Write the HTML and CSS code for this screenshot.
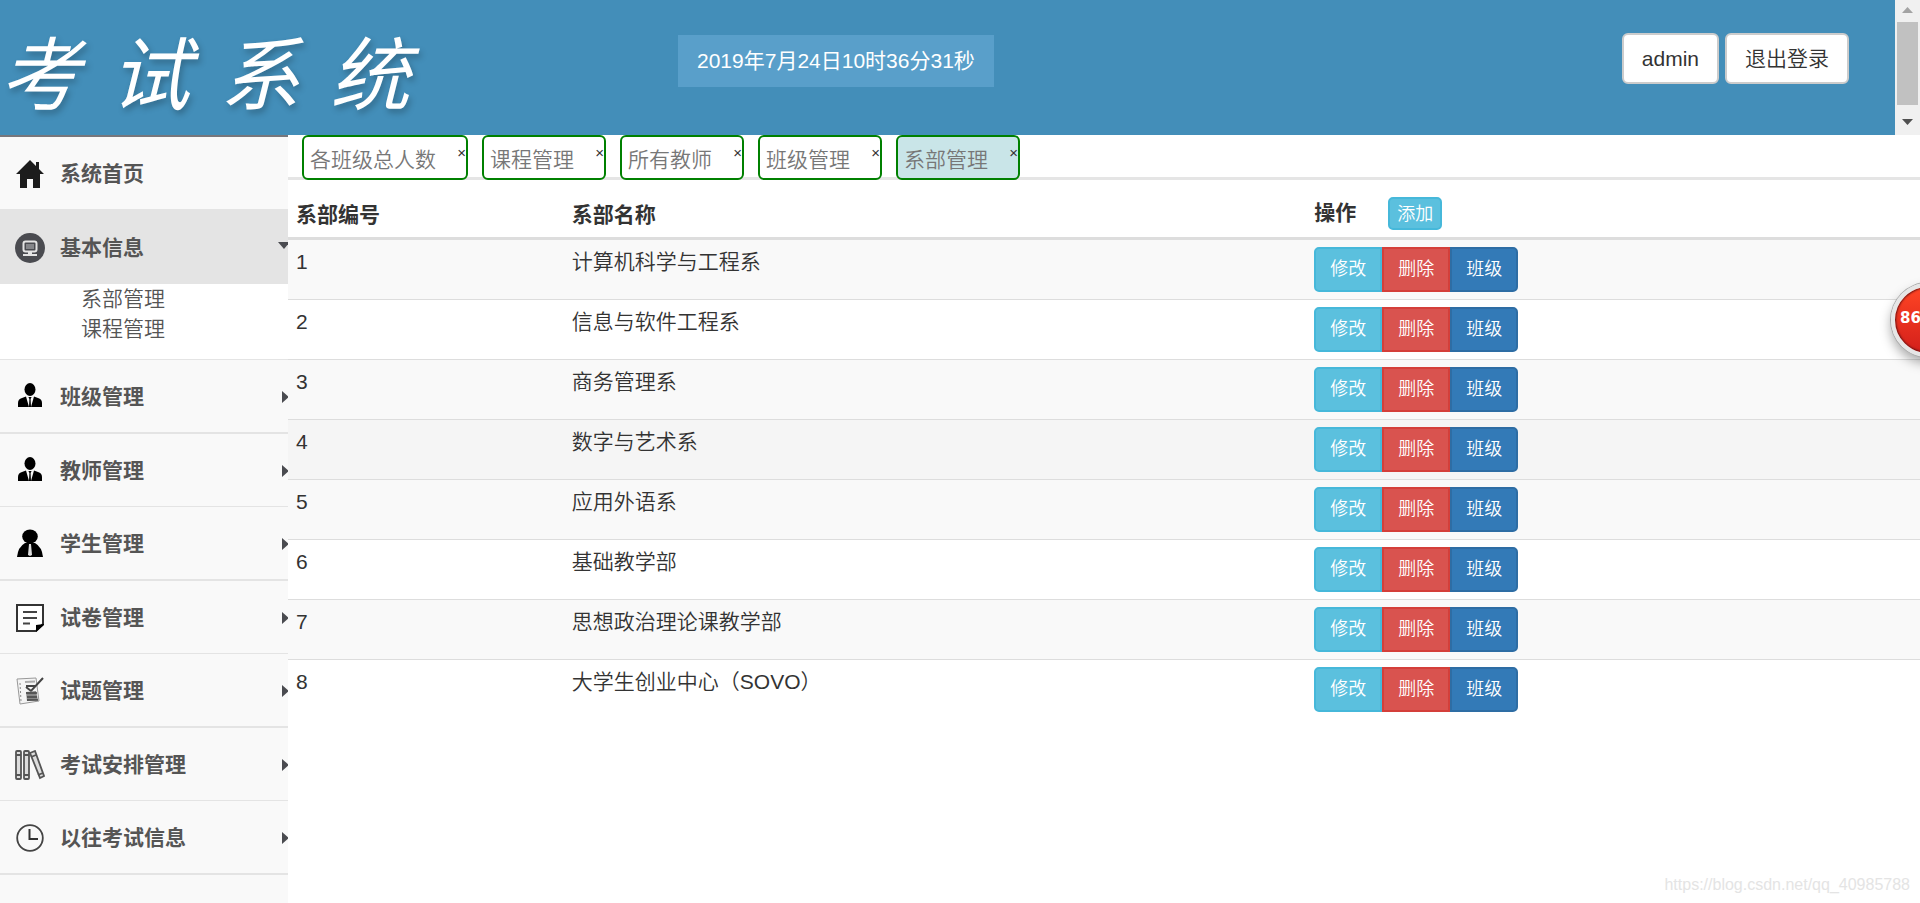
FILE: index.html
```html
<!DOCTYPE html>
<html lang="zh-CN">
<head>
<meta charset="utf-8">
<title>考试系统</title>
<link rel="stylesheet" href="styles.css">
</head>
<body>
<header class="header">
  <div class="header-main">
    <h1 class="logo"><span>考</span><span>试</span><span>系</span><span>统</span></h1>
    <time class="clock">2019年7月24日10时36分31秒</time>
    <div class="user">
      <button class="user-btn" type="button">admin</button>
      <button class="user-btn" type="button">退出登录</button>
    </div>
  </div>
  <div class="scrollbar" aria-hidden="true">
    <svg class="scroll-arrow" viewBox="0 0 25 22"><path d="M7 13h11l-5.500-6z" fill="#a3a3a3"/></svg>
    <div class="thumb"></div>
    <svg class="scroll-arrow low" viewBox="0 0 25 30"><path d="M7 14h11l-5.500 6z" fill="#505050"/></svg>
  </div>
</header>
<div class="body">
  <nav class="sidebar">
    <a class="item" href="#"><svg class="icon" viewBox="0 0 30 30"><path d="M15 1 1 15h4v14h7V20h6v9h7V15h4l-5-5V3h-3v4z" fill="#1c1c1c"/></svg><span>系统首页</span></a>
    <a class="item open" href="#"><svg class="icon" viewBox="0 0 30 30"><circle cx="15" cy="15" r="15" fill="#4a4b50"/><rect x="8.500" y="8.500" width="13" height="10" rx="2" fill="none" stroke="#e4e4e4" stroke-width="2"/><path d="M11 11h8v5h-8z" fill="#85868a"/><path d="M13 19h4v2h5v2H8v-2h5z" fill="#e4e4e4"/></svg><span>基本信息</span><svg class="caret down" viewBox="0 0 10 12"><path d="M0 0h12L6 7z" fill="#4a4b50"/></svg></a>
    <ul class="submenu">
      <li><a href="#">系部管理</a></li>
      <li><a href="#">课程管理</a></li>
    </ul>
    <a class="item thick" href="#"><svg class="icon" viewBox="0 0 30 30"><ellipse cx="15" cy="7.500" rx="5.500" ry="6.500"/><path d="M3 25v-4q0-4 4-5l4-1.500 3 10.500 .4-8-1-2h3.200l-1 2 .4 8 3-10.500 4 1.500q4 1 4 5v4z"/></svg><span>班级管理</span><svg class="caret" viewBox="0 0 6 12"><path d="M0 0v12l7-6z" fill="#4a4b50"/></svg></a>
    <a class="item" href="#"><svg class="icon" viewBox="0 0 30 30"><ellipse cx="15" cy="7.500" rx="5.500" ry="6.500"/><path d="M3 25v-4q0-4 4-5l4-1.500 3 10.500 .4-8-1-2h3.200l-1 2 .4 8 3-10.500 4 1.500q4 1 4 5v4z"/></svg><span>教师管理</span><svg class="caret" viewBox="0 0 6 12"><path d="M0 0v12l7-6z" fill="#4a4b50"/></svg></a>
    <a class="item thick" href="#"><svg class="icon" viewBox="0 0 30 30"><ellipse cx="15" cy="7.500" rx="7.800" ry="7"/><path d="M2 28q1-10 8-14h10q7 4 8 14z"/><path d="m14 15-1 11 2 1 2-1-1-11z" fill="#ddd"/></svg><span>学生管理</span><svg class="caret" viewBox="0 0 6 12"><path d="M0 0v12l7-6z" fill="#4a4b50"/></svg></a>
    <a class="item" href="#"><svg class="icon" viewBox="0 0 30 30"><path d="M2 2h26v19l-7 7H2z" fill="#fff" stroke="#333" stroke-width="2"/><path d="M29 21v1l-8 7v-7z"/><path d="M8 9h14M8 15h14M8 20.500h7" stroke="#444" stroke-width="2"/></svg><span>试卷管理</span><svg class="caret" viewBox="0 0 6 12"><path d="M0 0v12l7-6z" fill="#4a4b50"/></svg></a>
    <a class="item thick" href="#"><svg class="icon" viewBox="0 0 30 30"><path d="m2 3 19-1 3 23-19 3z" fill="#f4f4f4" stroke="#999"/><path d="m5 7 1 18" stroke="#888" stroke-dasharray="2 2"/><path d="M10 6l10-.5" stroke="#aaa" stroke-width="2"/><path d="M11 10h9M11 11l5 4L28 2" fill="none" stroke="#444" stroke-width="2"/><path d="m11 16 10-1 2 9-11 1z" fill="#888"/><path d="M11 17h11M12 21h10M12 24h11" stroke="#444" stroke-width="1.500"/></svg><span>试题管理</span><svg class="caret" viewBox="0 0 6 12"><path d="M0 0v12l7-6z" fill="#4a4b50"/></svg></a>
    <a class="item" href="#"><svg class="icon" viewBox="0 0 30 30"><g fill="#ddd" stroke="#555" stroke-width="1.800"><rect x="1" y="1" width="5" height="28" rx="1"/><rect x="9" y="1" width="5" height="28" rx="1"/><path d="m15 3 5-2 9 25-4 2z"/><path d="M1 5h5M9 5h5M16 7l5-2M1 25h5M9 25h5M23 25l5-2"/></g></svg><span>考试安排管理</span><svg class="caret" viewBox="0 0 6 12"><path d="M0 0v12l7-6z" fill="#4a4b50"/></svg></a>
    <a class="item thick" href="#"><svg class="icon" viewBox="0 0 30 30"><circle cx="15" cy="15" r="12.800" fill="none" stroke="#444" stroke-width="1.800"/><path d="M14.500 6v10H23" fill="none" stroke="#333" stroke-width="2"/></svg><span>以往考试信息</span><svg class="caret" viewBox="0 0 6 12"><path d="M0 0v12l7-6z" fill="#4a4b50"/></svg></a>
  </nav>
  <main class="content">
    <div class="tabs">
      <div class="tab"><a href="#">各班级总人数</a><button type="button" aria-label="关闭">×</button></div>
      <div class="tab"><a href="#">课程管理</a><button type="button" aria-label="关闭">×</button></div>
      <div class="tab"><a href="#">所有教师</a><button type="button" aria-label="关闭">×</button></div>
      <div class="tab"><a href="#">班级管理</a><button type="button" aria-label="关闭">×</button></div>
      <div class="tab current"><a href="#">系部管理</a><button type="button" aria-label="关闭">×</button></div>
    </div>
    <table class="table">
      <colgroup><col class="col-id"><col class="col-name"><col></colgroup>
      <thead>
        <tr><th>系部编号</th><th>系部名称</th><th>操作<button class="btn info small" type="button">添加</button></th></tr>
      </thead>
      <tbody>
        <tr><td>1</td><td>计算机科学与工程系</td><td><div class="group"><button class="btn info" type="button">修改</button><button class="btn danger" type="button">删除</button><button class="btn primary" type="button">班级</button></div></td></tr>
        <tr><td>2</td><td>信息与软件工程系</td><td><div class="group"><button class="btn info" type="button">修改</button><button class="btn danger" type="button">删除</button><button class="btn primary" type="button">班级</button></div></td></tr>
        <tr><td>3</td><td>商务管理系</td><td><div class="group"><button class="btn info" type="button">修改</button><button class="btn danger" type="button">删除</button><button class="btn primary" type="button">班级</button></div></td></tr>
        <tr class="hovered"><td>4</td><td>数字与艺术系</td><td><div class="group"><button class="btn info" type="button">修改</button><button class="btn danger" type="button">删除</button><button class="btn primary" type="button">班级</button></div></td></tr>
        <tr><td>5</td><td>应用外语系</td><td><div class="group"><button class="btn info" type="button">修改</button><button class="btn danger" type="button">删除</button><button class="btn primary" type="button">班级</button></div></td></tr>
        <tr><td>6</td><td>基础教学部</td><td><div class="group"><button class="btn info" type="button">修改</button><button class="btn danger" type="button">删除</button><button class="btn primary" type="button">班级</button></div></td></tr>
        <tr><td>7</td><td>思想政治理论课教学部</td><td><div class="group"><button class="btn info" type="button">修改</button><button class="btn danger" type="button">删除</button><button class="btn primary" type="button">班级</button></div></td></tr>
        <tr><td>8</td><td>大学生创业中心（SOVO）</td><td><div class="group"><button class="btn info" type="button">修改</button><button class="btn danger" type="button">删除</button><button class="btn primary" type="button">班级</button></div></td></tr>
      </tbody>
    </table>
  </main>
</div>
<div class="badge-area"><div class="badge">86</div></div>
<div class="watermark">https://blog.csdn.net/qq_40985788</div>
</body>
</html>
```
FILE: styles.css
```css
* { box-sizing: border-box; }
body {
  margin: 0;
  min-height: 100vh;
  display: flex;
  flex-direction: column;
  font: 350 21px/30px "Liberation Sans", "Noto Sans CJK SC", sans-serif;
  color: #333;
  background: #fff;
}
a { color: inherit; text-decoration: none; }
button { font: inherit; cursor: pointer; }

.header { display: flex; height: 135px; background: #438eb9; }
.header-main {
  flex: 1;
  display: flex;
  align-items: flex-start;
  padding-right: 46px;
}
.logo {
  flex: 0 0 678px;
  display: flex;
  gap: 30px;
  margin: 0;
  padding-top: 24px;
  font: italic 400 80px/90px "Noto Sans CJK SC", sans-serif;
  color: #fff;
  text-shadow: 2px 4px 6px rgba(0, 0, 0, .25);
}
.clock {
  margin-top: 35px;
  padding: 11px 19px;
  background: #599fca;
  color: #fff;
  font-weight: 400;
}
.user { display: flex; gap: 6px; margin: 33px 0 0 auto; }
.user-btn {
  height: 51px;
  padding: 0 18px;
  border: 2px solid #ccc;
  border-radius: 6px;
  background: #fff;
  color: #333;
}
.scrollbar {
  width: 25px;
  display: flex;
  flex-direction: column;
  background: #f0f0f0;
}
.scroll-arrow { display: block; width: 25px; height: 22px; }
.scroll-arrow.low { height: 30px; }
.thumb { flex: 1; margin: 0 2px; background: #c1c1c1; }

.body { flex: 1; display: flex; }
.sidebar {
  width: 288px;
  flex: none;
  overflow: hidden;
  background: #f9f9f9;
  border-top: 2px solid #77777c;
  color: #555;
}
.item {
  display: flex;
  align-items: center;
  min-height: 73px;
  padding: 2px 0 0 15px;
  border-bottom: 1px solid #e4e4e4;
  font-weight: 700;
}
.item.thick { min-height: 74px; border-bottom-width: 2px; }
.item.open { min-height: 74px; background: #e4e4e4; }
.icon { width: 30px; height: 30px; margin-right: 15px; }
.caret { width: 6px; height: 12px; margin-left: auto; }
.caret.down { width: 10px; }
.submenu {
  margin: 0;
  padding: 0 0 15px 81px;
  list-style: none;
  background: #fff;
  border-bottom: 1px solid #e4e4e4;
}

.content { flex: 1; }
.tabs {
  display: flex;
  gap: 14px;
  padding-left: 14px;
  background: linear-gradient(#e5e5e5, #e5e5e5) bottom / 100% 3px no-repeat;
}
.tab {
  display: flex;
  justify-content: space-between;
  height: 45px;
  padding-left: 6px;
  border: 2px solid #008000;
  border-radius: 6px;
  background: #fff;
  color: #777;
  line-height: 46px;
}
.tab.current { background: #c9e5e8; }
.tab button {
  width: 30px;
  height: 32px;
  padding: 0;
  border: 0;
  background: none;
  color: #333;
  font-size: 15px;
  line-height: 32px;
  text-align: right;
}

.table {
  width: 100%;
  table-layout: fixed;
  border-collapse: separate;
  border-spacing: 0;
}
.col-id { width: 16.9%; }
.col-name { width: 45.5%; }
.table th {
  height: 60px;
  padding: 7px 8px;
  border-bottom: 3px solid #ddd;
  text-align: left;
  vertical-align: bottom;
  font-weight: 700;
}
.table td {
  padding: 7px 8px;
  border-bottom: 1px solid #ddd;
  vertical-align: top;
}
.table tr:last-child td { border-bottom: 0; }
.table thead th { border-bottom: 3px solid #ddd; }
.table tbody tr:nth-child(odd) { background: #f9f9f9; }
.table tbody tr.hovered { background: #f5f5f5; }
.group { display: flex; }
.btn {
  height: 45px;
  padding: 0 14px 2px;
  border: 2px solid;
  color: #fff;
  font-size: 18px;
  font-weight: 350;
}
.group .btn:first-child { border-radius: 5px 0 0 5px; }
.group .btn:last-child { border-radius: 0 5px 5px 0; }
.btn.small {
  height: 33px;
  margin-left: 32px;
  padding: 0 7px;
  border-radius: 5px;
  line-height: 28px;
}
.info { background: #5bc0de; border-color: #46b8da; }
.danger { background: #d9534f; border-color: #d43f3a; }
.primary { background: #337ab7; border-color: #2e6da4; }

.badge-area {
  position: absolute;
  top: 270px;
  right: 0;
  width: 50px;
  height: 110px;
  overflow: hidden;
}
.badge {
  position: absolute;
  top: 13px;
  left: 21px;
  width: 74px;
  height: 74px;
  padding-left: 5px;
  border: 4px solid #e6e6e6;
  border-radius: 50%;
  background: linear-gradient(#ff4524, #d31f1b);
  box-shadow: 0 0 0 1px #aaa, inset 0 0 2px 1px #611, 0 6px 12px rgba(0, 0, 0, .35);
  color: #fff;
  font: 700 15px/62px "DejaVu Sans", sans-serif;
}
.watermark {
  position: absolute;
  right: 10px;
  bottom: 3px;
  color: #e4e4e4;
  font-size: 16px;
}
```
